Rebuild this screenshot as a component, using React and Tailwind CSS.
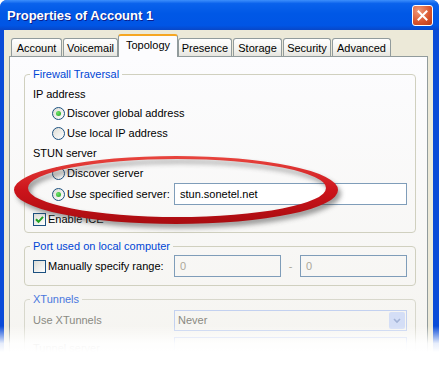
import React from 'react';

const tabs = [
  { label: 'Account', w: 51, ml: 2 },
  { label: 'Voicemail', w: 55, ml: 1 },
  { label: 'Topology', w: 60, ml: 0, active: true },
  { label: 'Presence', w: 54, ml: 0 },
  { label: 'Storage', w: 49, ml: 1 },
  { label: 'Security', w: 48, ml: 1 },
  { label: 'Advanced', w: 59, ml: 1 },
];

function Radio({ checked }) {
  return (
    <span className="flex h-[13px] w-[13px] shrink-0 items-center justify-center rounded-full border border-[#1c5180] bg-[linear-gradient(135deg,#dcdcd5,#ffffff)]">
      {checked && <span className="h-[5px] w-[5px] rounded-full bg-[radial-gradient(circle_at_35%_35%,#6ee36a,#21a121)]" />}
    </span>
  );
}

function Checkbox({ checked }) {
  return (
    <span className="flex h-[13px] w-[13px] shrink-0 items-center justify-center border border-[#1c5180] bg-[linear-gradient(135deg,#dcdcd5,#ffffff)]">
      {checked && (
        <svg width="9" height="9" viewBox="0 0 9 9">
          <path d="M1 4.2 L3.5 6.8 L8 1.8" stroke="#21a121" strokeWidth="2" fill="none" />
        </svg>
      )}
    </span>
  );
}

function Group({ title, titleColor, className, children }) {
  return (
    <fieldset className={`w-[392px] rounded-[4px] border border-[#d0d0bf] pl-[8px] ${className}`}>
      <legend className={`ml-[-3px] px-[3px] text-[11px] leading-[13px] ${titleColor}`}>{title}</legend>
      {children}
    </fieldset>
  );
}

function Ring() {
  const ell = (cx, cy, rx, ry) =>
    `M${cx - rx},${cy} a${rx},${ry} 0 1,0 ${rx * 2},0 a${rx},${ry} 0 1,0 ${-rx * 2},0 Z`;
  const d = ell(176, 190, 162, 34) + ' ' + ell(177, 188, 149, 29);
  return (
    <svg className="pointer-events-none absolute left-0 top-0" width="439" height="384" viewBox="0 0 439 384">
      <defs>
        <filter id="soft" x="-10%" y="-40%" width="120%" height="180%">
          <feGaussianBlur stdDeviation="2.5" />
        </filter>
        <linearGradient id="red" x1="0" y1="0" x2="0" y2="1">
          <stop offset="0" stopColor="#e8453e" />
          <stop offset="0.5" stopColor="#cc141b" />
          <stop offset="1" stopColor="#a90c10" />
        </linearGradient>
      </defs>
      <path d={d} fill="#3a3a3a" opacity="0.5" fillRule="evenodd" filter="url(#soft)" transform="translate(3 4)" />
      <path d={d} fill="url(#red)" fillRule="evenodd" />
    </svg>
  );
}

export default function App() {
  return (
    <div className="relative h-[384px] w-[439px] overflow-hidden bg-white font-['Liberation_Sans',Arial,sans-serif] text-[11px] text-black">
      <div className="flex h-[400px] w-[439px] flex-col overflow-hidden rounded-t-[7px] bg-[#0a4bd8]">
        {/* title bar */}
        <div className="flex h-[30px] shrink-0 items-start justify-between bg-[linear-gradient(to_bottom,#3d8ffc_0%,#0a62ec_12%,#0058e6_45%,#0055e5_85%,#0847c8_100%)] pl-[7px] pr-[6px]">
          <span className="mt-[8px] text-[13px] font-bold leading-[16px] text-white [text-shadow:1px_1px_0_#0a1e8c]">
            Properties of Account 1
          </span>
          <span className="mt-[5px] flex h-[21px] w-[21px] items-center justify-center rounded-[3px] border border-white bg-[radial-gradient(circle_at_30%_25%,#f09a7a,#d8532c_60%,#b83a18)]">
            <svg width="11" height="11" viewBox="0 0 11 11">
              <path d="M1.5 1.5 L9.5 9.5 M9.5 1.5 L1.5 9.5" stroke="#fff" strokeWidth="2" strokeLinecap="square" />
            </svg>
          </span>
        </div>

        {/* body */}
        <div className="ml-[4px] mr-[6px] flex flex-1 flex-col bg-[#ece9d8] px-[5px]">
          {/* tabs */}
          <div className="relative z-10 flex h-[26px] shrink-0 items-end">
            {tabs.map((t) =>
              t.active ? (
                <div
                  key={t.label}
                  className="mb-[-1px] flex h-[23px] shrink-0 justify-center rounded-t-[3px] border-x border-t-2 border-x-[#919b9c] border-t-[#f5a623] bg-[#fcfcfe] pt-[2px] leading-[14px]"
                  style={{ width: t.w, marginLeft: t.ml }}
                >
                  {t.label}
                </div>
              ) : (
                <div
                  key={t.label}
                  className="flex h-[18px] shrink-0 items-center justify-center rounded-t-[3px] border-x border-t border-[#919b9c] bg-[linear-gradient(to_bottom,#ffffff,#f3f3ef_60%,#e6e5df)] leading-[14px]"
                  style={{ width: t.w, marginLeft: t.ml }}
                >
                  {t.label}
                </div>
              )
            )}
          </div>

          {/* panel */}
          <div className="flex flex-1 flex-col border border-[#919b9c] bg-[linear-gradient(to_bottom,#fcfcfe,#f4f3ee)] pl-[14px]">
            <Group title="Firewall Traversal" titleColor="text-[#0046d5]" className="mt-[11px] pb-[3px]">
              <div className="mt-[3px] flex h-[20px] items-center">IP address</div>
              <div className="ml-[19px] flex h-[19px] items-center gap-[2px]">
                <Radio checked />
                <span>Discover global address</span>
              </div>
              <div className="ml-[19px] flex h-[20px] items-center gap-[2px]">
                <Radio />
                <span>Use local IP address</span>
              </div>
              <div className="flex h-[21px] items-center">STUN server</div>
              <div className="ml-[19px] flex h-[19px] items-center gap-[2px]">
                <Radio />
                <span>Discover server</span>
              </div>
              <div className="flex h-[22px] items-center">
                <div className="ml-[19px] flex w-[122px] items-center gap-[2px]">
                  <Radio checked />
                  <span>Use specified server:</span>
                </div>
                <div className="flex h-[22px] w-[233px] items-center border border-[#7f9db9] bg-white pl-[5px]">
                  stun.sonetel.net
                </div>
              </div>
              <div className="mt-[4px] flex h-[20px] items-center gap-[2px]">
                <Checkbox checked />
                <span>Enable ICE</span>
              </div>
            </Group>

            <Group title="Port used on local computer" titleColor="text-[#0046d5]" className="mt-[7px] pb-[8px]">
              <div className="mt-[2px] flex h-[22px] items-center">
                <div className="flex w-[141px] items-center gap-[2px]">
                  <Checkbox />
                  <span>Manually specify range:</span>
                </div>
                <div className="flex h-[22px] w-[107px] items-center border border-[#7f9db9] pl-[5px] text-[#aca899]">0</div>
                <div className="w-[19px] text-center text-[#aca899]">-</div>
                <div className="flex h-[22px] w-[107px] items-center border border-[#7f9db9] pl-[5px] text-[#aca899]">0</div>
              </div>
            </Group>

            <Group title="XTunnels" titleColor="text-[#4a78de]" className="mt-[7px] border-[#d8d8cc] pb-[8px]">
              <div className="mt-[4px] flex h-[21px] items-center">
                <div className="w-[141px] text-[#8a8a82]">Use XTunnels</div>
                <div className="flex h-[21px] w-[233px] items-center justify-between border border-[#c3d1f0] pl-[3px] pr-[1px] text-[#8a8a82]">
                  <span>Never</span>
                  <span className="flex h-[17px] w-[16px] items-center justify-center rounded-[2px] bg-[#d4def6]">
                    <svg width="8" height="6" viewBox="0 0 8 6">
                      <path d="M1 1 L4 4 L7 1" stroke="#a3b3d6" strokeWidth="1.6" fill="none" />
                    </svg>
                  </span>
                </div>
              </div>
              <div className="mt-[6px] flex h-[22px] items-center">
                <div className="w-[141px] text-[#8a8a82]">Tunnel server</div>
                <div className="h-[22px] w-[233px] border border-[#c3d1f0]" />
              </div>
            </Group>
          </div>
        </div>
      </div>

      <Ring />

      {/* faded bottom edge */}
      <div className="absolute left-0 top-[326px] h-[58px] w-full bg-[linear-gradient(to_bottom,rgba(255,255,255,0)_0%,rgba(255,255,255,0.9)_30%,#ffffff_45%,#ffffff_100%)]" />
    </div>
  );
}
